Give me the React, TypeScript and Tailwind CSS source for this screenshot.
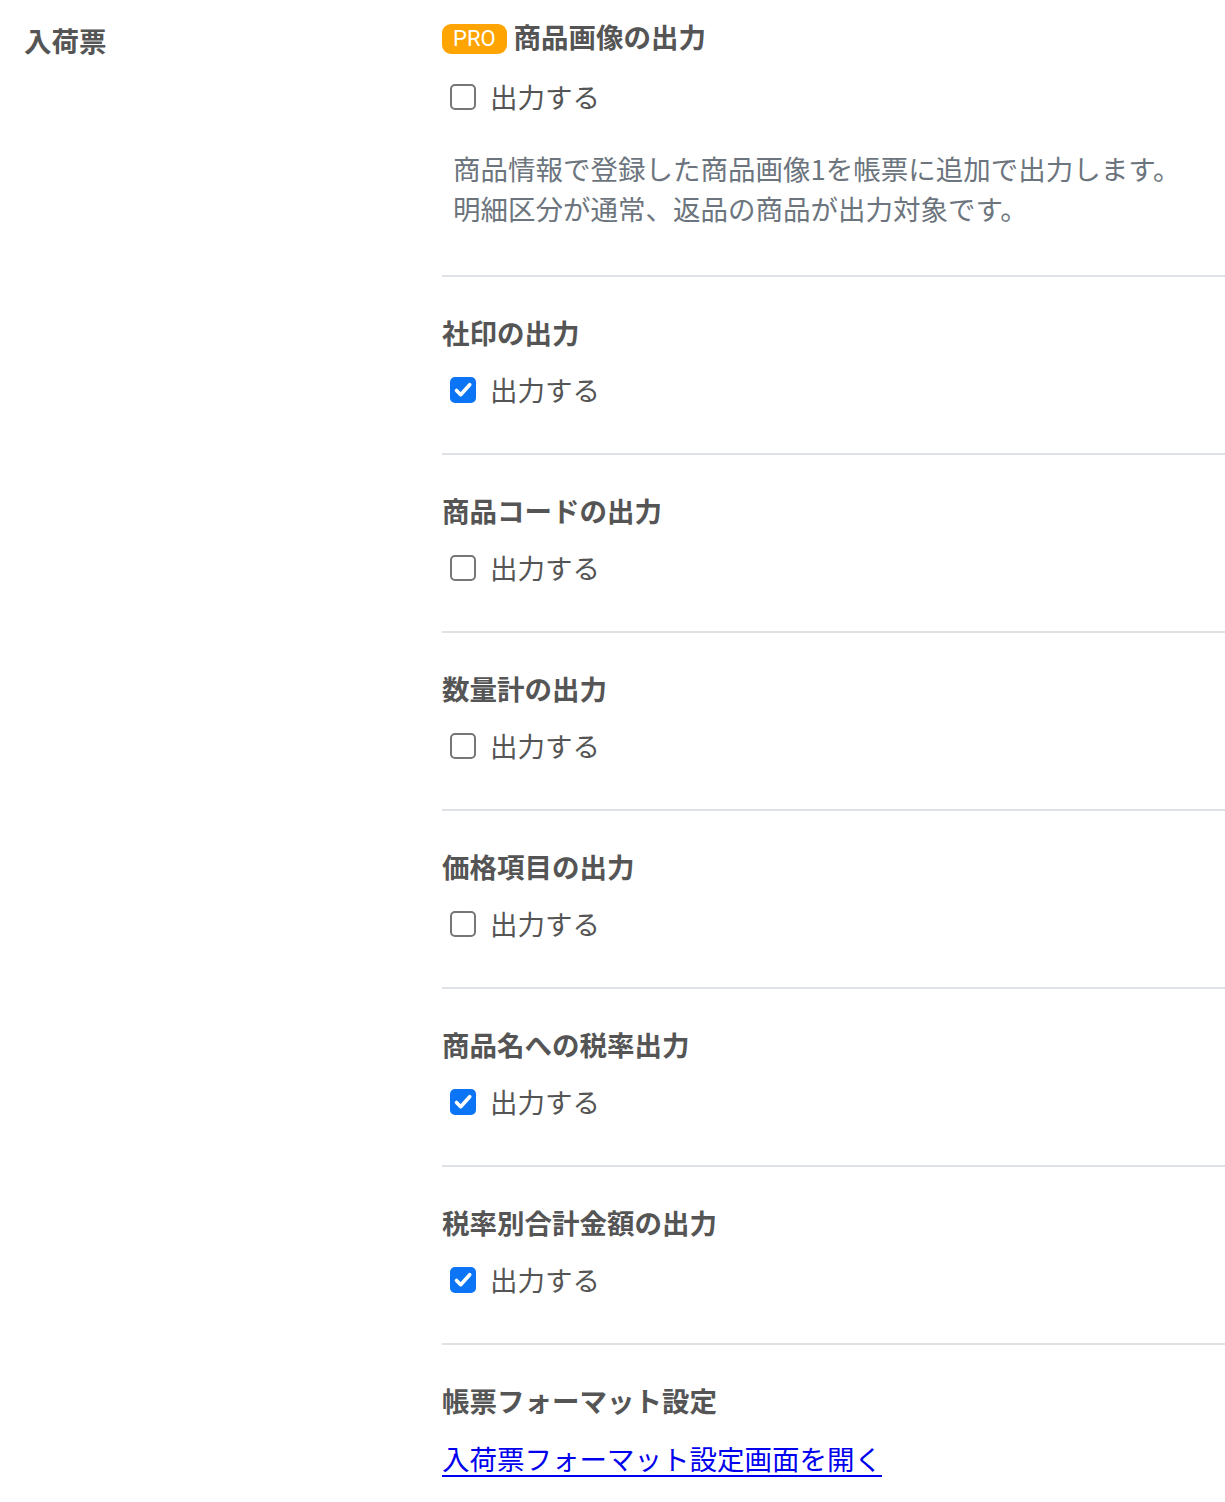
const sections = [
  { title: '社印の出力', checked: true },
  { title: '商品コードの出力', checked: false },
  { title: '数量計の出力', checked: false },
  { title: '価格項目の出力', checked: false },
  { title: '商品名への税率出力', checked: true },
  { title: '税率別合計金額の出力', checked: true },
]

const Checkbox = ({ checked }: { checked: boolean }) => (
  <span
    className={`flex items-center justify-center w-[26px] h-[26px] rounded-[5px] ${
      checked ? 'bg-[#0b75f5]' : 'border-[2.5px] border-[#767676] bg-white'
    }`}
  >
    {checked && (
      <svg viewBox="0 0 26 26" className="w-[26px] h-[26px]">
        <path d="M6.5 13.5l4.2 4.2 9-10" fill="none" stroke="white" strokeWidth="3.6" strokeLinecap="round" strokeLinejoin="round" />
      </svg>
    )}
  </span>
)

const CheckRow = ({ checked }: { checked: boolean }) => (
  <label className="flex items-center gap-[14px] pl-2 h-[40px]">
    <Checkbox checked={checked} />
    <span className="text-[27.5px] text-[#555]">出力する</span>
  </label>
)

const App = () => {
  return (
    <div
      className="flex bg-white min-h-[1502px] w-[1225px] text-[#555]"
      style={{ fontFamily: '"Noto Sans CJK JP", "Noto Sans", sans-serif' }}
    >
      <div className="w-[442px] pl-6 pt-[20px]">
        <h2 className="text-[27.5px] font-bold leading-[40px]">入荷票</h2>
      </div>

      <div className="flex-1">
        {/* first item with PRO badge */}
        <div className="pt-[17px] pb-[47px] border-b-2 border-[#dee2e6]">
          <div className="flex items-center gap-[7px] h-[40px]">
            <span className="mt-[4px] bg-[#ffa400] text-white text-[22px] leading-[30px] px-[11px] rounded-[9px] font-[Roboto]">
              PRO
            </span>
            <span className="text-[27.5px] font-bold">商品画像の出力</span>
          </div>
          <div className="mt-[20px]">
            <CheckRow checked={false} />
          </div>
          <p className="mt-[31px] pl-[11px] text-[27.5px] leading-[40px] text-[#6c757d]">
            商品情報で登録した商品画像1を帳票に追加で出力します。
            <br />
            明細区分が通常、返品の商品が出力対象です。
          </p>
        </div>

        {sections.map((s) => (
          <div key={s.title} className="pt-[35px] pb-[43px] border-b-2 border-[#dee2e6]">
            <h3 className="text-[27.5px] font-bold leading-[40px]">{s.title}</h3>
            <div className="mt-[18px]">
              <CheckRow checked={s.checked} />
            </div>
          </div>
        ))}

        <div className="pt-[35px]">
          <h3 className="text-[27.5px] font-bold leading-[40px]">帳票フォーマット設定</h3>
          <a href="#" className="block mt-[18px] text-[27.5px] leading-[40px] text-[#0000ee] underline underline-offset-[5px]">
            入荷票フォーマット設定画面を開く
          </a>
        </div>
      </div>
    </div>
  )
}

export default App
